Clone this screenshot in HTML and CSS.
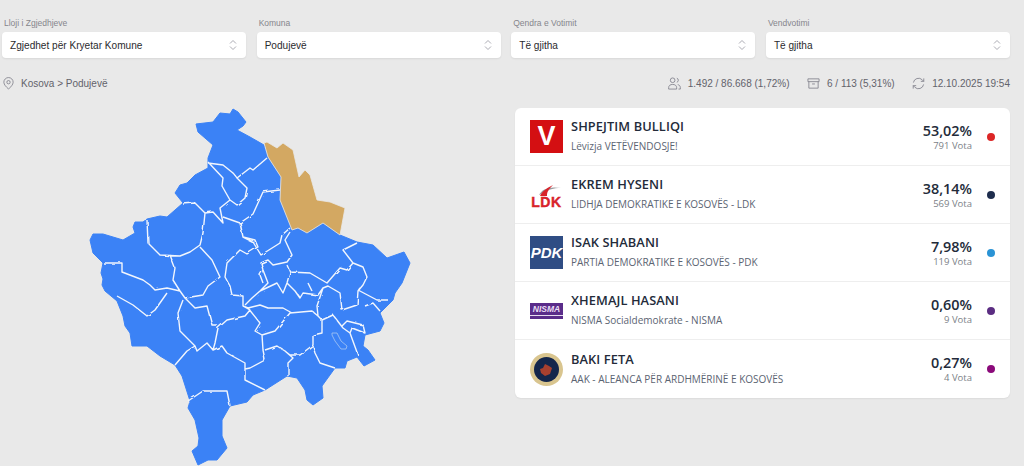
FILE: index.html
```html
<!DOCTYPE html>
<html lang="sq">
<head>
<meta charset="utf-8">
<title>Rezultatet</title>
<link rel="stylesheet" href="styles.css">
</head>
<body>
<div class="filters">
  <div class="field"><label class="field-label">Lloji i Zgjedhjeve</label>
    <div class="select"><span>Zgjedhet për Kryetar Komune</span><svg class="chev" viewBox="0 0 8 12"><path d="M1 4.5 4 1.5l3 3M1 7.500l3 3 3-3"/></svg></div></div>
  <div class="field"><label class="field-label">Komuna</label>
    <div class="select"><span>Podujevë</span><svg class="chev" viewBox="0 0 8 12"><path d="M1 4.5 4 1.5l3 3M1 7.500l3 3 3-3"/></svg></div></div>
  <div class="field"><label class="field-label">Qendra e Votimit</label>
    <div class="select"><span>Të gjitha</span><svg class="chev" viewBox="0 0 8 12"><path d="M1 4.5 4 1.5l3 3M1 7.500l3 3 3-3"/></svg></div></div>
  <div class="field"><label class="field-label">Vendvotimi</label>
    <div class="select"><span>Të gjitha</span><svg class="chev" viewBox="0 0 8 12"><path d="M1 4.5 4 1.5l3 3M1 7.500l3 3 3-3"/></svg></div></div>
</div>

<div class="info">
  <div class="crumb">
    <svg class="ico" viewBox="0 0 14 14"><path d="M7 13C4.500 10.500 2 8.300 2 5.600a5 5 0 0 1 10 0C12 8.300 9.500 10.500 7 13Z"/><circle cx="7" cy="5.600" r="1.800"/></svg>
    <span>Kosova &gt; Podujevë</span>
  </div>
  <div class="stats">
    <div class="stat"><svg class="ico" viewBox="0 0 14 14"><circle cx="5" cy="3.500" r="2.500"/><path d="M.7 13v-1.500C.7 9.200 2.500 8 5 8s4.300 1.200 4.300 3.500V13ZM9.500 1.300a2.300 2.300 0 0 1 0 4.400M10.500 8.200c1.700.4 2.800 1.500 2.800 3.300V13h-2"/></svg><span>1.492 / 86.668 (1,72%)</span></div>
    <div class="stat"><svg class="ico" viewBox="0 0 14 14"><path d="M1 2h12v3H1ZM2 5v7h10V5M5.500 7.500h3"/></svg><span>6 / 113 (5,31%)</span></div>
    <div class="stat"><svg class="ico" viewBox="0 0 14 14"><path d="M1.500 6A5.600 5.600 0 0 1 11 3l1.700 1.700M12.700 1.500v3.200H9.500M12.500 8A5.600 5.600 0 0 1 3 11L1.300 9.300M1.300 12.500V9.300h3.200"/></svg><span>12.10.2025 19:54</span></div>
  </div>
</div>

<main class="main">
  <div class="map-wrap">
    <svg class="map" viewBox="0 100 515 366">
      <defs>
        <filter id="wiggle" x="-5%" y="-5%" width="110%" height="110%">
          <feTurbulence type="fractalNoise" baseFrequency="0.13" numOctaves="1" seed="4" result="n"/>
          <feDisplacementMap in="SourceGraphic" in2="n" scale="3"/>
          <feGaussianBlur stdDeviation=".3"/>
        </filter>
      </defs>
      <path class="land" d="M233 109 238 112 246 122 243 126 237 130 250 137 264 145 268 157 281 177 280 200 292 230 298 228 307 233 323 223 340 235 357 242 373 245 387 258 404 252 410 263 402 283 395 293 393 300 380 313 384 323 380 331 365 335 363 346 368 350 375 360 364 366 357 357 347 361 345 368 335 368 322 386 323 398 313 405 307 400 305 390 297 378 287 376 265 390 253 395 247 402 230 406 222 420 222 436 227 448 217 460 208 460 198 465 192 451 198 446 199 438 195 420 188 408 190 401 182 376 175 365 160 356 147 346 132 346 130 333 125 326 123 316 117 301 105 291 102 285 103 279 101 273 103 263 93 253 90 240 93 234 103 234 113 237 123 240 135 233 133 227 135 222 143 222 147 219 160 216 167 217 183 203 175 193 180 185 187 183 195 175 208 168 208 158 213 145 198 132 196 124 213 122 220 113 230 114Z"/>
      <path class="pod" d="M264 143 267 142 277 148 283 143 293 150 299 177 305 170 310 175 317 200 330 202 345 208 340 235 323 223 307 233 298 228 292 230 280 200 281 177 268 157Z"/>
      <path class="borders" d="M183 204 195 203 205 213 213 212 223 223 220 208 230 200 237 205 245 198 247 188 237 178 233 173 223 165 208 163M208 162 223 178 222 186 230 200M237 178 250 168 253 170 267 158M223 217 240 223 253 214 263 192 280 190M240 222 243 237 253 242 261 255 280 243 282 235 290 228M240 223 243 237 255 240 258 247 247 254 240 250 227 263 225 277 230 286 232 295 243 296 243 306 250 310 245 316 227 320 218 328 215 343 213 350 207 343 197 351 195 346 180 331 178 313 183 300M205 213 203 233 200 245 190 252 180 256 160 255 148 243 147 220M200 247 212 260 220 277 208 286 203 295 185 298 180 291 167 288 155 290 150 285 143 280 122 272 122 263 103 263M170 255 175 268 173 280 180 291M117 296 133 305 147 316 155 310 167 293M185 298 195 308 207 306 212 325 218 325M195 346 187 351 175 365M213 350 222 346 227 353 245 363 245 380 265 390M245 369 250 368 265 360 263 350 262 335 255 331 260 323 248 308 243 306M262 335 275 331 290 313 312 311 318 316 322 320 322 333 313 335 313 345 300 355 290 355 285 351 277 346 265 350M288 376 288 363 293 358 285 351M313 346 315 353 320 363 335 368M322 320 333 315 343 328 350 333 358 355M350 333 352 328 365 333 363 325 347 321 342 326M318 316 317 306 323 288 328 286 340 293 342 310 357 305 358 291 360 288M358 290 377 300 388 300M365 306 373 303 380 311M248 308 260 305 268 308 283 308 292 313M245 305 252 298 260 291 268 283 263 270 261 263 268 260 273 265 287 262 292 255 285 240 290 232M287 265 290 272 310 273 327 283 340 268 347 270 353 263 343 250 357 243M353 263 363 267 367 277 363 285 358 291M263 270 260 275 263 283M260 291 277 283 283 293 287 283 295 291 300 298 303 293 318 295 323 288M308 283 312 291M290 272 287 283M188 401 203 391 227 391 230 406"/>
      <path class="lake" d="M332 333 337 333 341 341 347 346 346 349 341 349 335 341 332 335Z"/>
    </svg>
  </div>

  <section class="results">
    <article class="row">
      <div class="logo logo-v"><span>V</span></div>
      <div class="who"><h3 class="name">SHPEJTIM BULLIQI</h3><p class="party">Lëvizja VETËVENDOSJE!</p></div>
      <div class="nums"><strong class="pct">53,02%</strong><span class="votes">791 Vota</span></div>
      <i class="dot dot-red"></i>
    </article>
    <article class="row">
      <div class="logo logo-ldk">
        <svg class="swoosh" viewBox="0 0 33 14"><path class="sw-gray" d="M9 13C12 7 19 4 31 6 23 6 18 8 16 10Z"/><path class="sw-red" d="M10 14C12 10 15 7 23 3 18 8 17 10 17 14Z"/></svg>
        <span>LDK</span>
      </div>
      <div class="who"><h3 class="name">EKREM HYSENI</h3><p class="party">LIDHJA DEMOKRATIKE E KOSOVËS - LDK</p></div>
      <div class="nums"><strong class="pct">38,14%</strong><span class="votes">569 Vota</span></div>
      <i class="dot dot-navy"></i>
    </article>
    <article class="row">
      <div class="logo logo-pdk"><span>PDK</span></div>
      <div class="who"><h3 class="name">ISAK SHABANI</h3><p class="party">PARTIA DEMOKRATIKE E KOSOVËS - PDK</p></div>
      <div class="nums"><strong class="pct">7,98%</strong><span class="votes">119 Vota</span></div>
      <i class="dot dot-blue"></i>
    </article>
    <article class="row">
      <div class="logo logo-nisma"><span>NISMA</span></div>
      <div class="who"><h3 class="name">XHEMAJL HASANI</h3><p class="party">NISMA Socialdemokrate - NISMA</p></div>
      <div class="nums"><strong class="pct">0,60%</strong><span class="votes">9 Vota</span></div>
      <i class="dot dot-purple"></i>
    </article>
    <article class="row">
      <div class="logo logo-aak">
        <svg viewBox="0 0 33 33"><circle class="aak-ring" cx="16.500" cy="16.500" r="16.500"/><circle class="aak-in" cx="16.500" cy="16.500" r="12.500"/><path class="aak-map" d="M15 11 19 13 22 15 20 21 15 23 11 20 10 16 13 15Z"/></svg>
      </div>
      <div class="who"><h3 class="name">BAKI FETA</h3><p class="party">AAK - ALEANCA PËR ARDHMËRINË E KOSOVËS</p></div>
      <div class="nums"><strong class="pct">0,27%</strong><span class="votes">4 Vota</span></div>
      <i class="dot dot-magenta"></i>
    </article>
  </section>
</main>
</body>
</html>
```
FILE: styles.css
```css
* { box-sizing: border-box; }
html, body { margin: 0; height: 466px; overflow: hidden; }
body {
  background: #e9e9e9;
  font-family: "Liberation Sans", Arial, sans-serif;
  color: #27272a;
}
.filters {
  display: grid;
  grid-template-columns: repeat(4, 1fr);
  column-gap: 10.5px;
  padding: 18px 14px 0 2px;
}
.field-label {
  display: block;
  height: 14px;
  padding-left: 2px;
  font-size: 8.5px;
  line-height: 11px;
  color: #85858c;
}
.select {
  display: flex;
  align-items: center;
  justify-content: space-between;
  height: 26px;
  padding: 0 9px 0 8px;
  background: #fff;
  border-radius: 4px;
  box-shadow: 0 1px 2px rgba(0, 0, 0, .08);
  font-size: 10.100px;
  color: #2b2b2e;
}
.chev { width: 8px; height: 12px; }
.chev path { fill: none; stroke: #a1a1aa; stroke-width: .9; }
.info {
  display: flex;
  justify-content: space-between;
  align-items: center;
  height: 16px;
  margin-top: 17px;
  padding: 0 14px 0 2px;
  font-size: 10px;
  color: #63636b;
}
.crumb, .stat { display: flex; align-items: center; }
.crumb { gap: 6px; }
.stat { gap: 7px; }
.stats { display: flex; gap: 17.500px; }
.ico { width: 13px; height: 13px; }
.ico path, .ico circle { fill: none; stroke: #80808a; stroke-width: .9; }
.main {
  display: flex;
  margin-top: 17px;
}
.map-wrap { flex: 0 0 515px; height: 366px; margin-top: -8px; }
.map { display: block; width: 515px; height: 366px; }
.land { fill: #3b82f6; stroke: #3b82f6; stroke-width: 1; stroke-linejoin: round; }
.pod { fill: #d3a862; stroke: #e9e9e9; stroke-width: .8; stroke-linejoin: round; }
.borders { fill: none; stroke: #f2f6fd; stroke-width: 1.400; stroke-linejoin: round; filter: url(#wiggle); }
.lake { fill: #3b82f6; stroke: #a9c8f3; stroke-width: .8; }
.results {
  flex: 0 0 495px;
  height: 290px;
  margin-top: 0;
  background: #fff;
  border-radius: 6px;
  box-shadow: 0 1px 2px rgba(0, 0, 0, .06);
  font-family: "Open Sans", "Noto Sans", sans-serif;
}
.row {
  display: flex;
  align-items: center;
  height: 58px;
  padding: 0 15px;
  border-bottom: 1px solid #eeeeee;
}
.row:last-child { border-bottom: 0; }
.logo {
  position: relative;
  flex: 0 0 33px;
  height: 33px;
  display: flex;
  align-items: center;
  justify-content: center;
  overflow: hidden;
}
.logo-v {
  background: #d40f12;
  color: #fff;
  font: 700 27px/33px "Liberation Sans", sans-serif;
}
.logo-ldk { background: #fff; color: #d8232a; font: 900 14px/1 "Liberation Sans", sans-serif; }
.logo-ldk span { position: absolute; top: 17px; letter-spacing: .6px; -webkit-text-stroke: .4px #d8232a; }
.swoosh { position: absolute; left: 0; top: 4px; width: 33px; height: 14px; }
.sw-gray { fill: #9b9b9f; }
.sw-red { fill: #d8232a; }
.logo-pdk {
  background: #2f4d84;
  color: #fff;
  font: italic 700 15px/1 "Liberation Sans", sans-serif;
}
.logo-nisma { background: #fff; }
.logo-nisma span {
  display: block;
  width: 33px;
  height: 16px;
  background: #5a2c8a;
  color: #eadff5;
  font: italic 700 8.500px/13px "Liberation Sans", sans-serif;
  text-align: center;
  border-bottom: 3px solid #5a2c8a;
  box-shadow: inset 0 -1px 0 #e5dcef;
}
.logo-aak svg { display: block; width: 33px; height: 33px; }
.aak-ring { fill: #d9c58f; }
.aak-in { fill: #14264b; }
.aak-map { fill: #a8402f; }
.who { flex: 1; padding: 0 0 2px 8px; min-width: 0; }
.name {
  margin: 0;
  font-size: 12.800px;
  line-height: 16px;
  font-weight: 600;
  color: #232b3a;
  letter-spacing: .1px;
}
.party {
  margin: 6px 0 0;
  font-size: 10px;
  line-height: 13px;
  color: #5b6472;
}
.nums { display: flex; flex-direction: column; align-items: flex-end; padding-right: 15px; }
.pct { font-size: 14.400px; line-height: 17px; font-weight: 600; color: #232b3a; }
.votes { margin-top: 1px; font-size: 9.500px; line-height: 12px; color: #7b7f87; }
.dot { display: block; width: 8px; height: 8px; border-radius: 50%; }
.dot-red { background: #dc2626; }
.dot-navy { background: #1e2d4d; }
.dot-blue { background: #2a93d5; }
.dot-purple { background: #5b2d82; }
.dot-magenta { background: #8b0a7a; }
```
